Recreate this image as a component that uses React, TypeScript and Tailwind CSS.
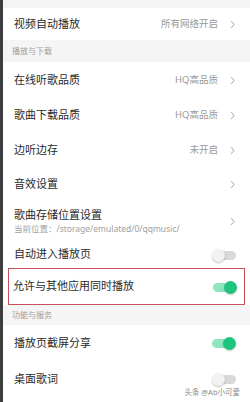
import React from "react";

const font = { fontFamily: '"Noto Sans", "Noto Sans CJK SC", sans-serif' };

function Chevron() {
  return (
    <svg width="5" height="9" viewBox="0 0 5 9" className="ml-[12px] mr-[2px] shrink-0">
      <polyline points="1,1 4,4.5 1,8" fill="none" stroke="#b8b8b8" strokeWidth="1.1" />
    </svg>
  );
}

function Toggle({ on }: { on: boolean }) {
  return on ? (
    <div className="relative w-[24px] h-[12px] mr-[1px]">
      <div className="absolute left-0 right-[2px] top-[2px] h-[9px] rounded-full bg-[#8ee6c1]" />
      <div className="absolute right-0 top-0 w-[13px] h-[13px] rounded-full bg-[#1fc57f] shadow-[0_1px_2px_rgba(0,0,0,0.2)]" />
    </div>
  ) : (
    <div className="relative w-[24px] h-[12px] mr-[1px]">
      <div className="absolute left-[2px] right-0 top-[2px] h-[9px] rounded-full bg-[#d9d9d9]" />
      <div className="absolute left-0 top-0 w-[13px] h-[13px] rounded-full bg-[#f2f2f2] shadow-[0_1px_2px_rgba(0,0,0,0.25)]" />
    </div>
  );
}

function Row({ title, value, chevron, toggle, h = "h-[35px]" }: { title: string; value?: string; chevron?: boolean; toggle?: boolean; h?: string }) {
  return (
    <div className={`flex items-center ${h} pl-[11px] pr-[13px] bg-white`}>
      <span className="flex-1 text-[11px] text-[#2a2a2a]">{title}</span>
      {value && <span className="text-[9.5px] text-[#9a9a9a]">{value}</span>}
      {chevron && <Chevron />}
      {toggle !== undefined && <Toggle on={toggle} />}
    </div>
  );
}

function Header({ title, h }: { title: string; h: string }) {
  return (
    <div className={`flex items-center ${h} pl-[9px] bg-[#f5f5f5] text-[8px] text-[#9d9d9d]`}>{title}</div>
  );
}

export default function App() {
  return (
    <div className="relative flex w-[250px] h-[402px] overflow-hidden bg-white" style={font}>
      <div className="w-[3px] shrink-0 bg-[#3d3d3d]" />
      <div className="flex-1 flex flex-col">
        <div className="h-[8px] bg-[#f5f5f5]" />
        <Row title="视频自动播放" value="所有网络开启" chevron h="h-[32px]" />
        <Header title="播放与下载" h="h-[22px]" />
        <Row title="在线听歌品质" value="HQ高品质" chevron h="h-[36px]" />
        <Row title="歌曲下载品质" value="HQ高品质" chevron />
        <Row title="边听边存" value="未开启" chevron />
        <Row title="音效设置" chevron h="h-[33px]" />
        <div className="flex items-center h-[40px] pl-[11px] pr-[13px] bg-white">
          <div className="flex-1 flex flex-col">
            <span className="text-[11px] leading-[15px] text-[#2a2a2a]">歌曲存储位置设置</span>
            <span className="text-[8.5px] leading-[13px] text-[#a0a0a0]">当前位置：/storage/emulated/0/qqmusic/</span>
          </div>
          <Chevron />
        </div>
        <Row title="自动进入播放页" toggle={false} h="h-[27px]" />
        <div className="mx-[5px] border-[1.5px] border-[#c9515a] bg-white">
          <div className="flex items-center h-[35px] pl-[4px] pr-[6px]">
            <span className="flex-1 text-[11px] text-[#2a2a2a]">允许与其他应用同时播放</span>
            <Toggle on />
          </div>
        </div>
        <Header title="功能与服务" h="h-[20px]" />
        <Row title="播放页截屏分享" toggle h="h-[36px]" />
        <Row title="桌面歌词" toggle={false} h="h-[36px]" />
        <div className="flex-1 bg-white" />
      </div>
      <div className="absolute right-[10px] bottom-[4px] text-[7.5px] text-[#8a8a8a]">头条 @Ab小可爱</div>
    </div>
  );
}
